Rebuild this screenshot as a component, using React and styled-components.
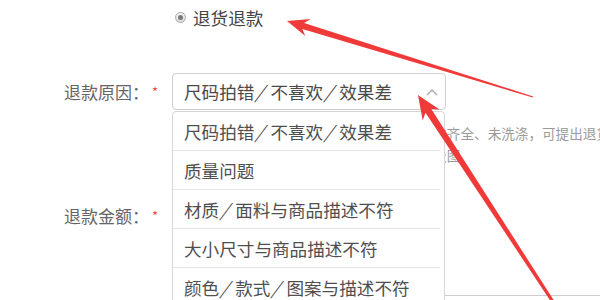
import React from "react";
import styled, { createGlobalStyle } from "styled-components";

const Global = createGlobalStyle`
  html, body { margin: 0; padding: 0; background: #fff; }
  body { font-family: "Noto Sans CJK SC", "Noto Sans", sans-serif; }
`;

const Page = styled.div`
  position: relative;
  width: 600px;
  height: 300px;
  overflow: hidden;
  background: #fff;
  display: flex;
  flex-direction: column;
`;

const RadioRow = styled.label`
  display: flex;
  align-items: center;
  gap: 7px;
  height: 20px;
  margin-top: 7px;
  padding-left: 175px;
  font-size: 17.6px;
  color: #444;
`;

const RadioDot = styled.span`
  width: 11px;
  height: 11px;
  box-sizing: border-box;
  border-radius: 50%;
  border: 1px solid #a9a9a9;
  background: linear-gradient(#f4f4f4, #dcdcdc);
  display: flex;
  align-items: center;
  justify-content: center;
  &::after {
    content: "";
    width: 5px;
    height: 5px;
    border-radius: 50%;
    background: #7a7a7a;
  }
`;

const FieldRow = styled.div`
  display: flex;
  align-items: ${(p) => (p.$top ? "flex-start" : "center")};
  margin-top: ${(p) => p.$mt}px;
`;

const Label = styled.div`
  width: 172px;
  flex: none;
  height: 37px;
  display: flex;
  align-items: center;
  justify-content: flex-end;
  padding-right: 14px;
  box-sizing: border-box;
  font-size: 17px;
  color: #666;
`;

const Star = styled.span`
  color: #f0513f;
  font-size: 13px;
  margin-left: 3px;
  align-self: center;
`;

const Column = styled.div`
  display: flex;
  flex-direction: column;
`;

const SelectWrap = styled.div`
  position: relative;
  width: 274px;
`;

const SelectBox = styled.div`
  height: 37px;
  box-sizing: border-box;
  border: 1px solid #cfcfcf;
  border-radius: 4px;
  display: flex;
  align-items: center;
  justify-content: space-between;
  padding: 0 6px 0 11px;
  font-size: 17.6px;
  color: #4a4a4a;
  background: #fff;
`;

const Menu = styled.ul`
  position: absolute;
  top: 38px;
  left: 0;
  width: 273px;
  margin: 0;
  padding: 0;
  list-style: none;
  background: #fff;
  border: 1px solid #d6d6d6;
  border-radius: 4px 4px 0 0;
  box-sizing: border-box;
  z-index: 2;
`;

const MenuItem = styled.li`
  height: 39px;
  box-sizing: border-box;
  display: flex;
  align-items: center;
  padding-left: 11px;
  margin-right: 4px;
  border-bottom: 1px solid #e6e6e6;
  font-size: 17.6px;
  color: #4f4f4f;
  white-space: nowrap;
`;

const Sep = styled.span`
  display: inline-block;
  width: 16px;
  text-align: center;
  transform: skewX(-24deg);
`;

const Hint = styled.div`
  width: 700px;
  margin-top: 12px;
  padding-left: 3px;
  font-size: 13.6px;
  line-height: 22px;
  color: #9a9a9a;
  white-space: nowrap;
`;

const Input = styled.div`
  width: 220px;
  height: 37px;
  box-sizing: border-box;
  border: 1px solid #cfcfcf;
  border-radius: 4px;
`;

const TextArea = styled.div`
  margin-top: 61px;
  margin-left: 172px;
  width: 520px;
  height: 80px;
  flex: none;
  border-top: 1px solid #cdcdcd;
  border-left: 1px solid #cdcdcd;
`;

const Overlay = styled.svg`
  position: absolute;
  left: 0;
  top: 0;
  width: 600px;
  height: 300px;
  pointer-events: none;
  z-index: 5;
`;

const withSlashes = (text) =>
  text.split("/").flatMap((part, i) =>
    i === 0 ? [part] : [<Sep key={i}>/</Sep>, part]
  );

const reasons = [
  "尺码拍错/不喜欢/效果差",
  "质量问题",
  "材质/面料与商品描述不符",
  "大小尺寸与商品描述不符",
  "颜色/款式/图案与描述不符",
];

export default function App() {
  return (
    <>
      <Global />
      <Page>
        <RadioRow>
          <RadioDot />
          退货退款
        </RadioRow>

        <FieldRow $mt={46} $top>
          <Label>
            退款原因：<Star>*</Star>
          </Label>
          <Column>
            <SelectWrap>
              <SelectBox>
                <span>{withSlashes(reasons[0])}</span>
                <svg width="14" height="10" viewBox="0 0 14 10">
                  <polyline
                    points="2,8 7,3 12,8"
                    fill="none"
                    stroke="#a8a8a8"
                    strokeWidth="1.4"
                  />
                </svg>
              </SelectBox>
              <Menu>
                {reasons.map((r) => (
                  <MenuItem key={r}>{withSlashes(r)}</MenuItem>
                ))}
              </Menu>
            </SelectWrap>
            <Hint>
              <div>温馨提示：若商品不影响二次销售，吊牌配件齐全、未洗涤，可提出退货退款申请</div>
              <div>如有质量问题，请上传问题部位的清晰照片及图</div>
            </Hint>
          </Column>
        </FieldRow>

        <FieldRow $mt={31}>
          <Label>
            退款金额：<Star>*</Star>
          </Label>
          <Input />
        </FieldRow>

        <TextArea />

        <Overlay viewBox="0 0 600 300">
          <polygon
            fill="#f03a3a"
            points="287,21 310.7,18.9 304.1,23.1 533.2,96.4 532.8,97.6 302.3,28.9 305.3,36.1"
          />
          <polygon
            fill="#f03a3a"
            points="418,95 439.5,109.6 431.3,109 556.3,304.2 553.7,305.8 425.5,112.8 422.7,120.6"
          />
        </Overlay>
      </Page>
    </>
  );
}
